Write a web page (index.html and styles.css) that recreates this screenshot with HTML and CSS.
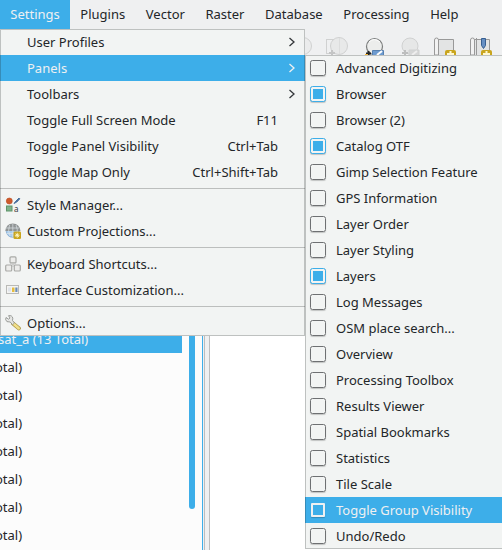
FILE: index.html
```
<!DOCTYPE html>
<html lang="en">
<head>
<meta charset="utf-8">
<title>Settings</title>
<link rel="stylesheet" href="styles.css">
</head>
<body>
<div class="app">
  <nav class="menubar">
    <span class="active">Settings</span><span>Plugins</span><span>Vector</span><span>Raster</span><span>Database</span><span>Processing</span><span>Help</span>
  </nav>
  <div class="toolbar">
    <svg width="202" height="26" viewBox="300 30 202 26" fill="none">
      <g stroke="#d0d1d1">
        <circle cx="303" cy="46" r="8.5" fill="#ebecec"/>
        <rect x="326.500" y="39.500" width="16" height="14"/>
        <circle cx="339" cy="46" r="8.500" fill="#e8e9e9"/>
        <path d="M339.500 38v16" stroke="#dcdddd"/>
        <path d="M329 53h6M332 50v6" stroke="#c4c5c5" stroke-width="2"/>
        <circle cx="410" cy="46" r="8" fill="#e6e7e7"/>
        <path d="M402 53h6M405 50v6" stroke="#bdbebe" stroke-width="2"/>
        <path d="M409 50h10v6h-10z" fill="#d5d6d6"/>
        <path d="M412 55l5-4" stroke="#eee" stroke-width="2"/>
      </g>
      <circle cx="374.500" cy="46.500" r="8" fill="#ecedec" stroke="#7c7e7e" stroke-width="1.200"/>
      <path d="M369 42q5-5 11 0" stroke="#fff"/>
      <path d="M366 53.500h5M368.500 51v5" stroke="#222" stroke-width="2"/>
      <path d="M365 55h3" stroke="#f5b73b" stroke-width="2"/>
      <path d="M372.500 50.500h11v6h-11z" fill="#6d9bd0" stroke="#5680b0"/>
      <path d="M377 55l5-4" stroke="#fff" stroke-width="2"/>
      <g id="sheet">
        <path d="M438 39.500h15.500V56H438z" fill="#e3e4e4" stroke="#999"/>
        <path d="M434.500 55V40q0-2 2-2t2 2v15z" fill="#f2f2f2" stroke="#999"/>
        <path d="M445 56v-4q0-2 2-2h7q2 0 2 2v4z" fill="#c9a51d"/>
        <path d="M447 54h7M450.500 51v5" stroke="#fff7cf" stroke-width="2"/>
      </g>
      <use href="#sheet" x="36"/>
      <path d="M476.500 38v17" stroke="#999"/>
      <path d="M481.500 38.500h4v7l-2 3-2-3z" fill="#6790c4" stroke="#375f91"/>
    </svg>
  </div>
  <div class="workspace">
    <div class="tree">
      <ul>
        <li class="selected">sat_a (13 Total)</li>
        <li>otal)</li><li>otal)</li><li>otal)</li><li>otal)</li><li>otal)</li><li>otal)</li><li>otal)</li>
      </ul>
      <div class="scroll"></div>
    </div>
    <div class="splitter"></div>
    <div class="canvas"></div>
  </div>

  <div class="menu settings">
    <div class="item"><i></i><span>User Profiles</span><svg class="arrow" width="8" height="12" viewBox="0 0 8 12"><path d="M1.500 2l4.500 4-4.500 4"/></svg></div>
    <div class="item hot"><i></i><span>Panels</span><svg class="arrow" width="8" height="12" viewBox="0 0 8 12"><path d="M1.500 2l4.500 4-4.500 4"/></svg></div>
    <div class="item"><i></i><span>Toolbars</span><svg class="arrow" width="8" height="12" viewBox="0 0 8 12"><path d="M1.500 2l4.500 4-4.500 4"/></svg></div>
    <div class="item"><i></i><span>Toggle Full Screen Mode</span><kbd>F11</kbd></div>
    <div class="item"><i></i><span>Toggle Panel Visibility</span><kbd>Ctrl+Tab</kbd></div>
    <div class="item"><i></i><span>Toggle Map Only</span><kbd>Ctrl+Shift+Tab</kbd></div>
    <hr>
    <div class="item"><i><svg width="16" height="16" viewBox="0 0 16 16">
      <circle cx="4.300" cy="4" r="3" fill="#cf5a2c" stroke="#b8491f" stroke-width=".6"/>
      <path d="M9 6.500l2-2.500 3-3 .8.800-3 3.200z" fill="#4a6f9c" stroke="#4a6f9c"/>
      <rect x="1.500" y="9" width="5.500" height="5" fill="#7fb38a" stroke="#5f946b"/>
      <text x="9" y="14.500" class="glyph">a</text></svg></i><span>Style Manager...</span></div>
    <div class="item"><i><svg width="16" height="16" viewBox="0 0 16 16">
      <circle cx="7.500" cy="8" r="6.300" fill="#a9cdee" stroke="#6f9cc8" stroke-width=".6"/>
      <path d="M.3 8Q1 1 7.800 .6 14.500 1 15.500 8z" fill="#909494"/>
      <path d="M7.800 1v13M4.500 2Q2.500 8 5 13M11 2q2 5 1 8M1 5h13M1.500 10.500h9" stroke="#dde4e8" stroke-width=".7" fill="none"/>
      <rect x="8.500" y="8.500" width="7.500" height="7.500" rx="1.300" fill="#c9a51d"/>
      <path d="M12.250 9.800v5M9.900 12.250h4.700M10.600 10.600l3.300 3.300M13.900 10.600l-3.300 3.300" stroke="#fff7c8" stroke-width=".9"/></svg></i><span>Custom Projections...</span></div>
    <hr>
    <div class="item"><i><svg width="16" height="16" viewBox="0 0 16 16" fill="#ededeb" stroke="#a9aaa7" stroke-width="1.200">
      <rect x="5" y=".9" width="6" height="6" rx="1"/><rect x=".7" y="9" width="6" height="6" rx="1"/><rect x="9.300" y="9" width="6" height="6" rx="1"/>
      <path d="M5 7.800h6M8 7v4" fill="none" stroke="#c5c5c3"/></svg></i><span>Keyboard Shortcuts...</span></div>
    <div class="item"><i><svg width="16" height="16" viewBox="0 0 16 16">
      <rect x="1.500" y="3.500" width="12" height="8" fill="#f4f4f2" stroke="#b9bab7"/>
      <path d="M3 5.500h3v4H3z" fill="#dfe4ea"/><path d="M7 5.500h2.500v4.500H7z" fill="#e5bd3e"/><path d="M10.300 5.500h2.200v4.500h-2.200z" fill="#6c8db5"/></svg></i><span>Interface Customization...</span></div>
    <hr>
    <div class="item"><i><svg width="16" height="16" viewBox="0 0 16 16">
      <path d="M8 8.500l5.800 4.800" stroke="#a89440" stroke-width="4" stroke-linecap="round"/>
      <path d="M8.500 8.800l5.200 4.500" stroke="#f1df8a" stroke-width="2.600" stroke-linecap="round"/>
      <path d="M1 2.500l2.600 1.700L5 3 3.500.700q3.500-.8 4.300 2.500L7.500 5.500 9.500 8 7.500 9.700 5.200 7Q1 7.500.6 4.500z" fill="#e5e6e4" stroke="#898b88" stroke-width=".8"/></svg></i><span>Options...</span></div>
  </div>

  <div class="menu panels">
    <div class="item"><b></b><span>Advanced Digitizing</span></div>
    <div class="item"><b class="on"></b><span>Browser</span></div>
    <div class="item"><b></b><span>Browser (2)</span></div>
    <div class="item"><b class="on"></b><span>Catalog OTF</span></div>
    <div class="item"><b></b><span>Gimp Selection Feature</span></div>
    <div class="item"><b></b><span>GPS Information</span></div>
    <div class="item"><b></b><span>Layer Order</span></div>
    <div class="item"><b></b><span>Layer Styling</span></div>
    <div class="item"><b class="on"></b><span>Layers</span></div>
    <div class="item"><b></b><span>Log Messages</span></div>
    <div class="item"><b></b><span>OSM place search...</span></div>
    <div class="item"><b></b><span>Overview</span></div>
    <div class="item"><b></b><span>Processing Toolbox</span></div>
    <div class="item"><b></b><span>Results Viewer</span></div>
    <div class="item"><b></b><span>Spatial Bookmarks</span></div>
    <div class="item"><b></b><span>Statistics</span></div>
    <div class="item"><b></b><span>Tile Scale</span></div>
    <div class="item hot"><b></b><span>Toggle Group Visibility</span></div>
    <div class="item"><b></b><span>Undo/Redo</span></div>
  </div>
</div>
</body>
</html>
```
FILE: styles.css
```
* { box-sizing: border-box; }
body {
  margin: 0;
  font: 13px/26px "Noto Sans", sans-serif;
  color: #232629;
  overflow: hidden;
}
.app {
  position: relative;
  display: flex;
  flex-direction: column;
  width: 502px;
  height: 550px;
  background: #eff0f1;
  white-space: nowrap;
  overflow: hidden;
}
.menubar { display: flex; height: 29px; line-height: 29px; flex: none; }
.menubar span { padding: 0 10.300px; }
.menubar .active { background: #3daee9; color: #eff0f1; }
.toolbar { display: flex; justify-content: flex-end; height: 27px; padding-top: 1px; flex: none; }
.workspace { display: flex; flex: 1; min-height: 0; }
.tree {
  display: flex;
  width: 203px;
  background: #fcfcfc;
  border-right: 1px solid #3daee9;
}
.tree ul { list-style: none; margin: 0; padding: 269px 0 0; width: 182px; }
.tree li { height: 28px; line-height: 28px; text-indent: -5px; }
.tree .selected { background: #3daee9; color: #eff0f1; text-indent: -2px; }
.scroll { width: 6px; height: 453px; margin-left: 7px; border-radius: 3px; background: #3daee9; }
.splitter { width: 6px; margin-left: 1px; border: solid #bcbdbe; border-width: 0 1px; }
.canvas { flex: 1; background: #fff; }

.menu { position: absolute; background: #f2f4f3; }
.menu::after {
  content: "";
  position: absolute;
  inset: 0;
  border: 1px solid rgba(35, 38, 41, .25);
  pointer-events: none;
}
.settings { left: 0; top: 29px; width: 305px; height: 307px; }
.panels { left: 305px; top: 55px; width: 210px; height: 494px; }
.item { display: flex; align-items: center; height: 26px; }
.item.hot { background: #3daee9; color: #eff0f1; }
.item i { display: flex; width: 16px; height: 16px; margin: 0 6px 0 5px; }
.item kbd { font: inherit; margin-left: auto; padding-right: 27px; }
.arrow { margin: 0 9px 0 auto; fill: none; stroke: #34373a; stroke-width: 1.300; }
.hot .arrow { stroke: #eff0f1; }
.glyph { font: 8px "Noto Sans", sans-serif; fill: #333; }
hr { height: 7px; margin: 0; border: 0; background: linear-gradient(#bcbebd, #bcbebd) 0 3px / 100% 1px no-repeat; }
.item b {
  width: 16px;
  height: 16px;
  margin: 0 10px 0 5px;
  border: 1px solid #6e7072;
  border-radius: 2.500px;
  box-shadow: 0 1px 1px rgba(0, 0, 0, .2);
}
.item b.on { border-color: #3daee9; background: #3daee9 content-box; padding: 2px; }
.item.hot b { width: 14px; height: 14px; margin: 0 11px 0 6px; border: 2px solid #eff0f1; border-radius: 1px; }
```
